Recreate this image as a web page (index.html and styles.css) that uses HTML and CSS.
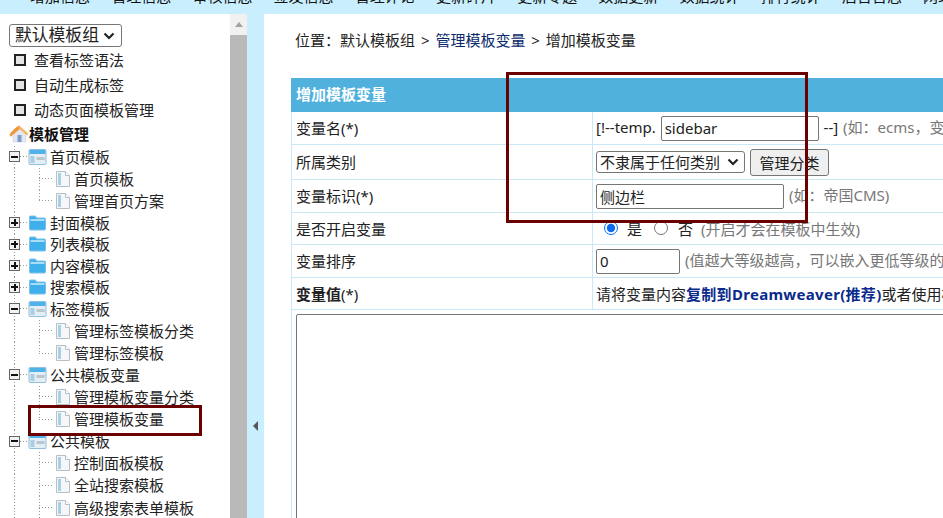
FILE: index.html
```html
<!DOCTYPE html>
<html lang="zh">
<head>
<meta charset="utf-8">
<title>增加模板变量</title>
<link rel="stylesheet" href="styles.css">
</head>
<body>
<svg class="defs" width="0" height="0">
  <symbol id="open" viewBox="0 0 18 16">
    <rect x="0.5" y="0.5" width="17" height="15" rx="1" fill="#e4eef5" stroke="#8fc0dc"/>
    <rect x="1" y="1" width="16" height="4" fill="#4fb2ea"/>
    <rect x="2" y="7" width="4" height="7" fill="#a9cde4"/>
    <rect x="8" y="8" width="8" height="3" fill="#b9c6cf"/>
  </symbol>
  <symbol id="closed" viewBox="0 0 18 16">
    <path d="M1 3.500V14a1 1 0 0 0 1 1h14a1 1 0 0 0 1-1V4a1 1 0 0 0-1-1H8L7 1H2a1 1 0 0 0-1 1z" fill="#3fb0ec" stroke="#7cc2e8"/>
    <rect x="2" y="4" width="14" height="2" fill="#a8dcf7"/>
  </symbol>
  <symbol id="leaf" viewBox="0 0 16 18">
    <path d="M1.500 1.500h9l4 4v11h-13z" fill="#f4f6f8" stroke="#b7bfc6"/>
    <path d="M10.500 1.500v4h4" fill="#fff" stroke="#b7bfc6"/>
    <rect x="3" y="3" width="3" height="12" fill="#a7cfe8"/>
  </symbol>
  <symbol id="home" viewBox="0 0 20 18">
    <path d="M4 9 10.500 3.500 17 9v8H4z" fill="#e3e8f0" stroke="#c9cfd9" stroke-width="0.500"/>
    <path d="M0.500 10C2 7 6 3 10 0.500c1 0.300 1.500 1.500 2 2.500L3 10.500 2 12z" fill="#f0973a"/>
    <path d="M10 0.500 19.500 8.500 18 10.500 10 3.500z" fill="#f7b667"/>
    <rect x="8.500" y="10" width="4" height="7" fill="#7f9bca"/>
  </symbol>
</svg>

<nav class="topnav">
  <a>增加信息</a><a>管理信息</a><a>审核信息</a><a>签发信息</a><a>管理评论</a><a>更新碎片</a><a>更新专题</a><a>数据更新</a><a>数据统计</a><a>排行统计</a><a>后台日志</a><a>网站管理</a>
</nav>

<div class="layout">
  <aside class="sidebar">
    <select class="group-select"><option>默认模板组</option></select>
    <ul class="quick">
      <li><i class="box"></i>查看标签语法</li>
      <li><i class="box"></i>自动生成标签</li>
      <li><i class="box"></i>动态页面模板管理</li>
    </ul>
    <div class="tree-root"><svg class="ico-home"><use href="#home"/></svg>模板管理</div>
    <ul class="tree">
      <li class="node"><i class="toggle minus"></i><svg class="ico-f"><use href="#open"/></svg>首页模板</li>
      <li class="leafrow"><svg class="ico-l"><use href="#leaf"/></svg>首页模板</li>
      <li class="leafrow"><svg class="ico-l"><use href="#leaf"/></svg>管理首页方案</li>
      <li class="node"><i class="toggle plus"></i><svg class="ico-f"><use href="#closed"/></svg>封面模板</li>
      <li class="node"><i class="toggle plus"></i><svg class="ico-f"><use href="#closed"/></svg>列表模板</li>
      <li class="node"><i class="toggle plus"></i><svg class="ico-f"><use href="#closed"/></svg>内容模板</li>
      <li class="node"><i class="toggle plus"></i><svg class="ico-f"><use href="#closed"/></svg>搜索模板</li>
      <li class="node"><i class="toggle minus"></i><svg class="ico-f"><use href="#open"/></svg>标签模板</li>
      <li class="leafrow"><svg class="ico-l"><use href="#leaf"/></svg>管理标签模板分类</li>
      <li class="leafrow"><svg class="ico-l"><use href="#leaf"/></svg>管理标签模板</li>
      <li class="node"><i class="toggle minus"></i><svg class="ico-f"><use href="#open"/></svg>公共模板变量</li>
      <li class="leafrow"><svg class="ico-l"><use href="#leaf"/></svg>管理模板变量分类</li>
      <li class="leafrow"><svg class="ico-l"><use href="#leaf"/></svg>管理模板变量</li>
      <li class="node"><i class="toggle minus"></i><svg class="ico-f"><use href="#open"/></svg>公共模板</li>
      <li class="leafrow"><svg class="ico-l"><use href="#leaf"/></svg>控制面板模板</li>
      <li class="leafrow"><svg class="ico-l"><use href="#leaf"/></svg>全站搜索模板</li>
      <li class="leafrow"><svg class="ico-l"><use href="#leaf"/></svg>高级搜索表单模板</li>
      <li class="leafrow"><svg class="ico-l"><use href="#leaf"/></svg>相关信息模板</li>
    </ul>
  </aside>

  <div class="scrollbar"><div class="scroll-btn"><i class="arrow-up"></i></div><div class="scroll-thumb"></div></div>
  <div class="collapse"><i class="arrow-left"></i></div>

  <main class="main">
    <p class="crumbs">位置：默认模板组 &gt; <a>管理模板变量</a> &gt; 增加模板变量</p>
    <table class="form">
      <colgroup><col class="col-lab"><col class="col-val"></colgroup>
      <tr class="title"><th colspan="2">增加模板变量</th></tr>
      <tr class="r33"><td class="lab">变量名(*)</td><td class="val">[!--temp. <input class="in in-name" value="sidebar"> --] <span class="hint">(如：ecms，变量名为英文字母或数字组成)</span></td></tr>
      <tr class="r35"><td class="lab">所属类别</td><td class="val"><select class="sel"><option>不隶属于任何类别</option></select> <button class="btn">管理分类</button></td></tr>
      <tr class="r33"><td class="lab">变量标识(*)</td><td class="val"><input class="in in-mark" value="侧边栏"> <span class="hint">(如：帝国CMS)</span></td></tr>
      <tr class="r32"><td class="lab">是否开启变量</td><td class="val radios"><input class="rad" type="radio" name="on" checked>是<input class="rad" type="radio" name="on">否 <span class="hint">(开启才会在模板中生效)</span></td></tr>
      <tr class="r33"><td class="lab">变量排序</td><td class="val"><input class="in in-ord" value="0"> <span class="hint">(值越大等级越高，可以嵌入更低等级的变量，相同等级的不能嵌入)</span></td></tr>
      <tr class="r32"><td class="lab"><b>变量值</b>(*)</td><td class="val">请将变量内容<a class="strong">复制到Dreamweaver(推荐)</a>或者使用模板在线编辑进行可视化编辑</td></tr>
      <tr><td class="full" colspan="2"><textarea class="code"></textarea></td></tr>
    </table>
  </main>
</div>

<div class="mark mark-a"></div>
<div class="mark mark-b"></div>
</body>
</html>
```
FILE: styles.css
```css
* { box-sizing: border-box; }
html, body { margin: 0; height: 518px; overflow: hidden; background: #fff; }
body { font: 15px/1.2 "Noto Sans", "Noto Sans CJK SC", sans-serif; color: #222; }
ul { list-style: none; margin: 0; padding: 0; }
.defs { display: block; height: 0; }

.topnav { display: flex; height: 14px; background: #c9effe; overflow: hidden; padding-left: 30px; }
.topnav a { flex: 0 0 81.2px; line-height: 18px; height: 18px; margin-top: -13px; white-space: nowrap; color: #111; }

.layout { display: flex; height: 504px; overflow: hidden; }
.sidebar { flex: 0 0 230px; overflow: hidden; padding: 10px 0 0 9px; background: #fff; }
.group-select { display: block; width: 113px; height: 23px; font: 16.800px "Liberation Sans", "Noto Sans CJK SC", sans-serif; color: #222; border: 1px solid #767676; border-radius: 3px; padding: 0 0 0 5px; appearance: none; background: #fff url("data:image/svg+xml,%3Csvg xmlns='http://www.w3.org/2000/svg' width='12' height='8'%3E%3Cpath d='M1.500 1.500 6 6l4.500-4.500' fill='none' stroke='%23222' stroke-width='2.200'/%3E%3C/svg%3E") no-repeat right 6px center; }
.quick { margin: 0 0 0 5px; }
.quick li { display: flex; align-items: center; height: 25px; }
.box { width: 12px; height: 12px; border: 2px solid #222; background: #e4e4e4; margin-right: 8px; flex: none; }
.tree-root { display: flex; align-items: center; height: 24px; font-weight: bold; color: #111; }
.ico-home { width: 20px; height: 18px; flex: none; }
.tree { margin-left: -9px; }
.tree li { display: flex; align-items: center; white-space: nowrap; }
.node { height: 21.500px; padding-left: 9px; background:
  repeating-linear-gradient(90deg, #999 0 1px, transparent 1px 3px) 20px 50% / 8px 1px no-repeat,
  repeating-linear-gradient(#999 0 1px, transparent 1px 3px) 14px 0 / 1px 100% no-repeat; }
.leafrow { height: 22.300px; padding-left: 55px; background:
  repeating-linear-gradient(#999 0 1px, transparent 1px 3px) 14px 0 / 1px 100% no-repeat,
  repeating-linear-gradient(#999 0 1px, transparent 1px 3px) 39px 0 / 1px 50% no-repeat,
  repeating-linear-gradient(90deg, #999 0 1px, transparent 1px 3px) 39px 50% / 15px 1px no-repeat; }
.leafrow:has(+ .leafrow) { background:
  repeating-linear-gradient(#999 0 1px, transparent 1px 3px) 14px 0 / 1px 100% no-repeat,
  repeating-linear-gradient(#999 0 1px, transparent 1px 3px) 39px 0 / 1px 100% no-repeat,
  repeating-linear-gradient(90deg, #999 0 1px, transparent 1px 3px) 39px 50% / 15px 1px no-repeat; }
.toggle { width: 11px; height: 11px; border: 1px solid #666; background: #f3f3f3; flex: none; margin-right: 8px; position: relative; }
.toggle::before { content: ""; position: absolute; left: 1px; right: 1px; top: 3.500px; height: 2px; background: #111; }
.plus::after { content: ""; position: absolute; top: 1px; bottom: 1px; left: 3.500px; width: 2px; background: #111; }
.ico-f { width: 19px; height: 16px; margin-right: 3px; flex: none; background: #fff; }
.ico-l { width: 16px; height: 18px; margin-right: 3px; flex: none; background: #fff; }

.scrollbar { flex: 0 0 17px; background: #b9b9b9; display: flex; flex-direction: column; }
.scroll-btn { height: 21px; background: #f1f1f1; display: flex; align-items: center; justify-content: center; }
.arrow-up { border-style: solid; border-color: transparent transparent #a3a3a3; border-width: 0 4.500px 5px; }
.scroll-thumb { flex: 1; }
.collapse { flex: 0 0 17px; background: #c9effe; display: flex; align-items: flex-start; justify-content: center; padding-top: 407px; }
.arrow-left { border-style: solid; border-color: transparent #555 transparent transparent; border-width: 5px 5px 5px 0; }

.main { flex: 1; min-width: 0; overflow: hidden; padding: 0 0 0 27px; background: #fff; }
.crumbs { margin: 17px 0 0 4px; height: 47px; line-height: 18px; white-space: nowrap; word-spacing: 2px; }
.crumbs a { color: #0b2a6b; }
.form { width: 900px; border-collapse: collapse; border: 1px solid #4fb4de; table-layout: fixed; }
.col-lab { width: 301px; }
.form td, .form th { padding: 0; border: 1px solid #c9e9f6; }
.title th { height: 33px; background: #50b1dd; color: #fff; text-align: left; padding: 0 0 2px 4px; border-color: #50b1dd; }
.r33 td { height: 33px; }
.r35 td { height: 35px; }
.r32 td { height: 32px; }
.form .lab { padding-left: 4px; }
.form .val { padding-left: 3px; white-space: nowrap; overflow: hidden; word-spacing: 1px; }
.hint { color: #777; }
.in { height: 25px; font: 15px "Noto Sans", "Noto Sans CJK SC", sans-serif; color: #222; border: 1px solid #767676; border-radius: 2px; padding: 1px 3px; vertical-align: middle; background: #fff; }
.in-name { width: 158px; }
.in-mark { width: 188px; }
.in-ord { width: 84px; }
.sel { width: 149px; height: 22px; font: 15px "Liberation Sans", "Noto Sans CJK SC", sans-serif; color: #222; border: 1px solid #767676; border-radius: 3px; padding: 0 0 0 3px; vertical-align: middle; appearance: none; background: #fff url("data:image/svg+xml,%3Csvg xmlns='http://www.w3.org/2000/svg' width='12' height='8'%3E%3Cpath d='M1.500 1.500 6 6l4.500-4.500' fill='none' stroke='%23222' stroke-width='2.200'/%3E%3C/svg%3E") no-repeat right 5px center; }
.btn { width: 79px; height: 27px; font: 15px "Liberation Sans", "Noto Sans CJK SC", sans-serif; color: #222; background: #efefef; border: 1px solid #767676; border-radius: 3px; padding: 0; vertical-align: middle; margin-left: 0; }
.rad { width: 14px; height: 14px; margin: 0 9px 0 8px; accent-color: #0b6cf0; vertical-align: 0; }
.radios .rad + .rad { margin: 0 10px 0 12px; }
.radios .hint { margin-left: 3px; }
.strong { color: #0b2a8b; font-weight: bold; letter-spacing: 0.3px; }
.form .full { padding: 4px; }
.code { display: block; width: 880px; height: 300px; border: 1px solid #767676; border-radius: 2px; resize: none; }

.mark { position: absolute; border: 3px solid #6b0000; pointer-events: none; }
.mark-a { left: 506px; top: 72px; width: 302px; height: 151px; }
.mark-b { left: 28px; top: 405px; width: 174px; height: 31px; }
```
